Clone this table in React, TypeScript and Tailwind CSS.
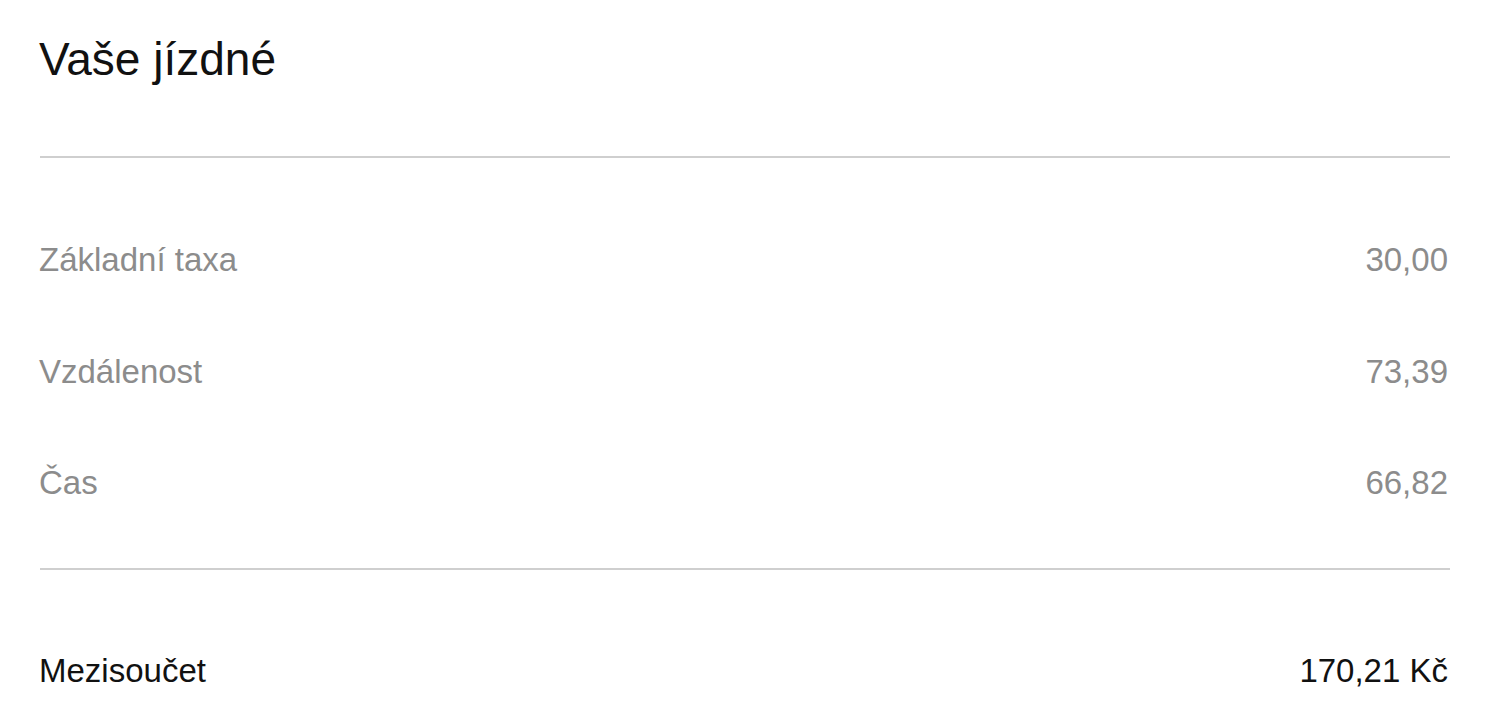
export default function App() {
  const rows = [
    ["Základní taxa", "30,00"],
    ["Vzdálenost", "73,39"],
    ["Čas", "66,82"],
  ];
  return (
    <div
      className="w-[1488px] h-[726px] bg-white overflow-hidden pl-[39px] pr-[40px]"
      style={{ fontFamily: '"Liberation Sans", Arial, sans-serif' }}
    >
      <h1 className="pt-[36px] text-[46px] leading-[46px] text-[#111]">Vaše jízdné</h1>
      <div className="mt-[74px] h-[2px] bg-[#cfcfcf] ml-[1px] -mr-[2px]" />
      <div className="mt-[46px]">
        {rows.map(([l, v]) => (
          <div key={l} className="h-[111.5px] flex items-center justify-between text-[33px] leading-[33px] text-[#8c8c8c]">
            <span>{l}</span>
            <span>{v}</span>
          </div>
        ))}
      </div>
      <div className="mt-[29px] h-[2px] bg-[#cfcfcf] ml-[1px] -mr-[2px]" />
      <div className="mt-[84px] flex items-center justify-between text-[33px] leading-[33px] text-[#111]">
        <span>Mezisoučet</span>
        <span>170,21 Kč</span>
      </div>
    </div>
  );
}
